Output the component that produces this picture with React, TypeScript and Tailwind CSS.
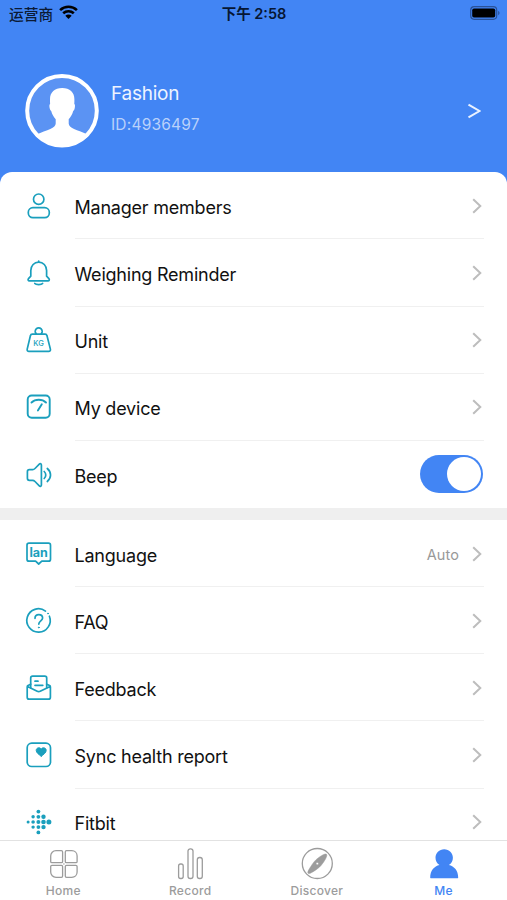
import type { ReactNode } from 'react';

const TEAL = '#1a9fbd';

function RowIcon({ children }: { children: ReactNode }) {
  return (
    <svg
      width="30"
      height="30"
      viewBox="0 0 30 30"
      fill="none"
      stroke={TEAL}
      strokeWidth="1.7"
      strokeLinecap="round"
      strokeLinejoin="round"
      className="shrink-0"
    >
      {children}
    </svg>
  );
}

const MembersIcon = () => (
  <RowIcon>
    <circle cx="14.7" cy="8.2" r="5.2" />
    <rect x="4.3" y="16.7" width="21" height="10" rx="4.6" />
  </RowIcon>
);

const BellIcon = () => (
  <RowIcon>
    <path d="M14.7 3v1.2M6.8 18.2v-5.6c0-5 3.5-8.4 7.9-8.4s7.9 3.4 7.9 8.4v5.6l2.3 2.4c.9 1 .3 2.2-.9 2.2H5.4c-1.2 0-1.8-1.2-.9-2.2z" />
    <path d="M10.8 25.500c1.200 1.500 6.600 1.500 7.800 0" />
  </RowIcon>
);

const WeightIcon = () => (
  <RowIcon>
    <path d="M12.2 8.900a3.500 3.500 0 1 1 5 0" />
    <path d="M8.300 9.200h12.800c1 0 1.700.6 1.900 1.600l3.400 13.300c.3 1.300-.4 2.200-1.700 2.200H4.900c-1.300 0-2-.9-1.700-2.200L6.400 10.800c.2-1 .9-1.600 1.900-1.600z" />
    <text
      x="14.500"
      y="20.800"
      textAnchor="middle"
      fill={TEAL}
      stroke="none"
      className="font-['Inter'] text-[7.5px] font-medium"
    >
      KG
    </text>
  </RowIcon>
);

const ScaleIcon = () => (
  <RowIcon>
    <rect x="3.700" y="3.500" width="22" height="22.300" rx="4" strokeWidth="1.900" />
    <path d="M7.500 10.500c3.800-3.600 10.700-3.600 14.500 0M17.800 12.300l-3.900 6.100" strokeWidth="1.900" />
  </RowIcon>
);

const SpeakerIcon = () => (
  <RowIcon>
    <path d="M5.400 9.700h3.200c.9 0 1.700-.5 2.400-1.200l4.300-4.300c.9-.9 2.100-.4 2.100.9v19.800c0 1.300-1.200 1.800-2.100.9L11 21.500c-.7-.7-1.500-1.200-2.400-1.200H5.400c-1.200 0-2-.8-2-2v-6.600c0-1.200.8-2 2-2z" />
    <path d="M20.200 11.500c2.100 2 2.100 5 0 7M23.300 8.500c4.300 3.700 4.300 9.300 0 13" />
  </RowIcon>
);

const LanguageIcon = () => (
  <RowIcon>
    <path d="M5 4.200h19.500c1.200 0 2 .8 2 2v14c0 1.200-.8 2-2 2h-6.700L14.700 25l-3.100-2.800H5c-1.200 0-2-.8-2-2v-14c0-1.200.8-2 2-2z" />
    <text
      x="14.700"
      y="17.600"
      textAnchor="middle"
      fill={TEAL}
      stroke="none"
      className="font-['Inter'] text-[12.5px] font-bold"
    >
      lan
    </text>
  </RowIcon>
);

const FaqIcon = () => (
  <RowIcon>
    <path d="M21.500 5.100A11.700 11.700 0 1 0 25.400 10.200" />
    <circle cx="24" cy="7.500" r="0.500" fill={TEAL} strokeWidth="0.800" />
    <path d="M11 12.300c0-2.200 1.600-3.700 3.800-3.700s3.800 1.500 3.800 3.500c0 2.700-3.800 3-3.800 6" />
    <circle cx="14.800" cy="21.500" r="0.500" fill={TEAL} strokeWidth="0.800" />
  </RowIcon>
);

const FeedbackIcon = () => (
  <RowIcon>
    <path d="M6.700 14.800V5c0-1.200.8-1.900 1.900-1.900h12.200c1.200 0 1.900.8 1.900 1.900v9.800" />
    <path d="M6.700 11.200 4 12.600c-.6.300-.8.700-.8 1.300v10.300c0 1.200.8 2 2 2h19.200c1.200 0 2-.8 2-2V13.900c0-.6-.2-1-.8-1.300l-2.900-1.400M3.500 13.600l9.700 4.700c1 .5 2 .5 3 0l9.900-4.700" />
    <path d="M11 8.200h3M11 12.300h7.800" />
  </RowIcon>
);

const HealthIcon = () => (
  <RowIcon>
    <rect x="3.200" y="3.200" width="23.300" height="23.300" rx="4.500" />
    <path
      d="M17.200 16.200c-2.600-1.800-5-3.600-5-5.900 0-2.600 3.500-3.400 5-1.300 1.500-2.100 5-1.300 5 1.300 0 2.300-2.400 4.100-5 5.900z"
      fill={TEAL}
      strokeWidth="1"
    />
  </RowIcon>
);

const FITBIT_DOTS: [number, number, number][] = [
  [4.1, 15, 1.5],
  [9.1, 9.8, 1.7], [9.1, 15, 1.8], [9.1, 20.1, 1.7],
  [14.4, 4.6, 1.9], [14.4, 9.8, 1.9], [14.4, 15, 2], [14.4, 20.1, 1.9], [14.4, 25.4, 1.9],
  [19.5, 9.8, 2.2], [19.5, 15, 2.3], [19.5, 20.1, 2.2],
  [24.9, 15, 2.5],
];

const FitbitIcon = () => (
  <RowIcon>
    {FITBIT_DOTS.map(([x, y, r]) => (
      <circle key={`${x}-${y}`} cx={x} cy={y} r={r} fill={TEAL} stroke="none" />
    ))}
  </RowIcon>
);

const Chevron = () => (
  <svg width="10" height="17" viewBox="0 0 10 17" fill="none" stroke="#bdbdbd" strokeWidth="2">
    <path d="M1.200 2.200 8.300 9l-7.100 6.800" />
  </svg>
);

type RowProps = { icon: ReactNode; label: string; last?: boolean; children?: ReactNode };

function Row({ icon, label, last, children }: RowProps) {
  return (
    <div className="flex h-[67.2px] shrink-0 items-center pl-6">
      {icon}
      <div
        className={`ml-[20.500px] mr-[23px] flex h-full grow items-center justify-between border-b pr-[2px] ${
          last ? 'border-transparent' : 'border-[#f0f0f0]'
        }`}
      >
        <span className="pt-[5px] text-[18px] leading-6 tracking-[-0.22px] text-[#111]">{label}</span>
        {children ?? <Chevron />}
      </div>
    </div>
  );
}

function Tab({ label, active, children }: { label: string; active?: boolean; children: ReactNode }) {
  return (
    <div className={`flex flex-1 flex-col items-center pt-[6px] ${active ? 'text-[#4285f4]' : 'text-[#9c9c9c]'}`}>
      <svg width="34" height="34" viewBox="0 0 34 34" fill="none" stroke="currentColor" strokeWidth="1.300">
        {children}
      </svg>
      <span className="mt-[2px] text-[12px] font-medium leading-4 tracking-[0.3px]">{label}</span>
    </div>
  );
}

function StatusBar() {
  return (
    <div className="grid h-7 grid-cols-3 items-center pl-[9px] pr-[6px] text-black">
      <div className="flex items-center gap-[6px]">
        <span className="font-['Noto_Sans_CJK_SC',sans-serif] text-[14.700px] font-medium leading-7 text-[#0b1a35]">
          运营商
        </span>
        <svg width="19" height="15" viewBox="0 0 19 15" fill="none" stroke="#000" strokeWidth="2.600" className="-mt-[3px]">
          <path d="M1.100 5.100c4.700-4.500 12.100-4.500 16.800 0" />
          <path d="M4.200 8.300c3-2.800 7.600-2.800 10.600 0" />
          <path d="M9.500 14 6.300 10.700c1.800-1.600 4.600-1.600 6.400 0z" fill="#000" stroke="none" />
        </svg>
      </div>
      <div className="-ml-[2px] whitespace-nowrap text-center font-['Inter','Noto_Sans_CJK_SC',sans-serif] text-[14.500px] font-semibold leading-7 text-[#061633]">
        下午 2:58
      </div>
      <svg width="31" height="14" viewBox="0 0 31 14" className="-mt-[2px] justify-self-end">
        <rect x="0.700" y="0.700" width="26" height="12.600" rx="3.500" fill="none" stroke="#2a5298" strokeWidth="1.200" />
        <rect x="2.200" y="2.500" width="23" height="9" rx="1.800" fill="#000" />
        <path d="M28.200 4.800c1.800.7 1.800 3.700 0 4.400z" fill="#2a5298" />
      </svg>
    </div>
  );
}

function Profile() {
  return (
    <div className="flex items-center pl-[25px] pr-[26px] pt-[45px]">
      <svg width="75" height="75" viewBox="0 0 75 75" className="shrink-0">
        <circle cx="37" cy="37.700" r="34.800" fill="#5b93f3" />
        <path
          d="M37.200 14.900c7.600 0 12.200 4.400 12.200 11.300 0 1.700 0 3.300-.1 4.800.9.500.8 2.400.4 4.300-.3 1.300-.8 2.200-1.500 2.600-.9 3.400-2.500 6.100-4.500 8.300v4.300c0 4.300 7.400 6.300 20.800 11.500C57.500 68.700 47.800 73 37 73S16.500 68.700 9.900 62c13.400-5.200 20.800-7.200 20.800-11.500v-4.300c-2-2.200-3.600-4.900-4.500-8.300-.7-.4-1.200-1.300-1.500-2.600-.4-1.900-.5-3.800.4-4.300-.1-1.500-.1-3.100-.1-4.800 0-6.900 4.600-11.300 12.200-11.300z"
          fill="#fff"
        />
        <circle cx="37" cy="37.700" r="34.800" fill="none" stroke="#fff" strokeWidth="4" />
      </svg>
      <div className="-mt-[4px] ml-[11px] grow">
        <div className="text-[19px] leading-6 tracking-[-0.25px] text-[#eef4ff]">Fashion</div>
        <div className="mt-[9px] text-[15.500px] leading-5 tracking-[0.2px] text-[#b9d1fb]">ID:4936497</div>
      </div>
      <svg width="14" height="16" viewBox="0 0 14 16" fill="none" stroke="#eaf2ff" strokeWidth="2">
        <path d="M1.500 1.600 12.500 8l-11 6.400" />
      </svg>
    </div>
  );
}

export default function App() {
  return (
    <div className="flex h-[900px] w-[507px] flex-col overflow-hidden bg-white font-['Inter',sans-serif]">
      <header className="h-[184px] shrink-0 bg-[#4285f4]">
        <StatusBar />
        <Profile />
      </header>
      <main className="relative -mt-3 flex h-[668px] shrink-0 flex-col overflow-hidden rounded-t-[12px] bg-white pt-[0.3px]">
        <Row icon={<MembersIcon />} label="Manager members" />
        <Row icon={<BellIcon />} label="Weighing Reminder" />
        <Row icon={<WeightIcon />} label="Unit" />
        <Row icon={<ScaleIcon />} label="My device" />
        <Row icon={<SpeakerIcon />} label="Beep" last>
          <div className="-mr-px flex h-[38px] w-[63px] items-center justify-end rounded-full bg-[#4285f4] pr-[2px]">
            <div className="size-[34px] rounded-full bg-white" />
          </div>
        </Row>
        <div className="h-[11.7px] shrink-0 bg-[#efefef]" />
        <Row icon={<LanguageIcon />} label="Language">
          <div className="flex items-center gap-[13px]">
            <span className="pt-[4px] text-[14.500px] leading-5 tracking-[0.1px] text-[#999]">Auto</span>
            <Chevron />
          </div>
        </Row>
        <Row icon={<FaqIcon />} label="FAQ" />
        <Row icon={<FeedbackIcon />} label="Feedback" />
        <Row icon={<HealthIcon />} label="Sync health report" />
        <Row icon={<FitbitIcon />} label="Fitbit" last />
      </main>
      <nav className="flex h-[60px] shrink-0 border-t border-[#e2e2e2] bg-white">
        <Tab label="Home">
          <path d="M10 3.700h5.400c.7 0 1.200.5 1.200 1.200v9.600c0 .7-.5 1.200-1.200 1.200H5.900c-.7 0-1.200-.5-1.200-1.200V9c0-3 2.300-5.300 5.300-5.300zM20.500 3.700h5.300c3 0 5.300 2.300 5.300 5.300v5.500c0 .7-.5 1.200-1.200 1.200h-9.400c-.7 0-1.200-.5-1.200-1.200V4.900c0-.7.5-1.200 1.200-1.200zM5.900 18.300h9.500c.7 0 1.200.5 1.200 1.200v9.600c0 .7-.5 1.200-1.200 1.200H10c-3 0-5.300-2.300-5.300-5.300v-5.500c0-.7.5-1.200 1.200-1.200zM20.500 18.300h9.400c.7 0 1.200.5 1.200 1.200V25c0 3-2.300 5.300-5.300 5.300h-5.300c-.7 0-1.200-.5-1.200-1.200v-9.600c0-.7.5-1.200 1.200-1.200z" />
          <circle cx="17.900" cy="17" r="0.700" fill="currentColor" stroke="none" />
        </Tab>
        <Tab label="Record">
          <rect x="5.600" y="17" width="4.600" height="14.500" rx="2" />
          <rect x="15" y="1.800" width="5" height="29.700" rx="2.300" />
          <rect x="24.300" y="10.500" width="5" height="21" rx="2.300" />
        </Tab>
        <Tab label="Discover">
          <circle cx="17.300" cy="16.500" r="15" />
          <path
            fillRule="evenodd"
            d="M26.500 7.300c1 1.200-.6 4.200-2 6.400-2 3.200-4.100 6-7.300 8.200-2.600 1.800-7.900 5.700-9.100 4.400-1.200-1.200 1.800-5.300 3.300-7.700 2-3.200 3.700-5.300 6.700-7.600 2.400-1.800 7.200-5 8.400-3.700zM17.300 15.400a1.200 1.200 0 1 0 0 2.400 1.200 1.200 0 0 0 0-2.400z"
            fill="currentColor"
            stroke="currentColor"
            strokeWidth="0.500"
          />
        </Tab>
        <Tab label="Me" active>
          <path
            d="M17.200 2.200c4.900 0 8.700 3.800 8.700 8.500 0 3.200-1.500 5.800-4 7.300 5.200 1.100 9.300 5.600 9.300 12.700 0 .3-.2.500-.5.500h-27c-.3 0-.5-.2-.5-.5 0-7.100 4.100-11.600 9.300-12.700-2.500-1.500-4-4.100-4-7.300 0-4.700 3.800-8.500 8.700-8.500z"
            fill="currentColor"
            stroke="none"
          />
        </Tab>
      </nav>
    </div>
  );
}
